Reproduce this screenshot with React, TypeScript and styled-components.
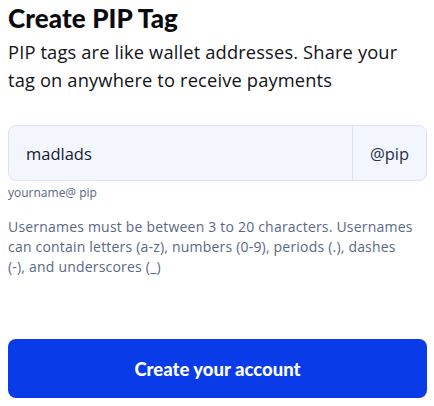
import React from "react";
import styled, { createGlobalStyle } from "styled-components";

const Global = createGlobalStyle`
  html, body { margin: 0; padding: 0; background: #ffffff; }
  body { font-family: "Open Sans", "Lato", sans-serif; }
`;

const Page = styled.div`
  padding: 0 7px 0 8px;
  display: flex;
  flex-direction: column;
`;

const Title = styled.h1`
  margin: 2px 0 0 0;
  font-family: "Lato", sans-serif;
  font-weight: 900;
  font-size: 26px;
  line-height: 32px;
  color: #0b0b0f;
  letter-spacing: 0.1px;
`;

const Subtitle = styled.p`
  margin: 4px 0 0 0;
  font-size: 18.3px;
  letter-spacing: 0.15px;
  line-height: 28px;
  color: #121217;
  font-weight: 400;
`;

const Field = styled.div`
  margin-top: 31px;
  display: flex;
  height: 56px;
  border: 1px solid #dbe2f5;
  border-radius: 8px;
  background: #f3f6fe;
  box-sizing: border-box;
  overflow: hidden;
`;

const Input = styled.div`
  flex: 1;
  display: flex;
  align-items: center;
  padding-left: 17px;
  font-size: 16.5px;
  color: #161a2e;
`;

const Suffix = styled.div`
  width: 73px;
  border-left: 1px solid #dbe2f5;
  display: flex;
  align-items: center;
  justify-content: center;
  font-size: 16.5px;
  color: #2a2f45;
`;

const Hint = styled.div`
  margin-top: 4px;
  font-size: 12px;
  line-height: 15px;
  color: #5b6785;
`;

const Rules = styled.p`
  margin: 17px 0 0 0;
  font-size: 14px;
  letter-spacing: 0.2px;
  line-height: 20px;
  color: #5b6785;
`;

const Button = styled.button`
  margin-top: 62px;
  height: 59px;
  border: none;
  border-radius: 8px;
  background: #0a3be8;
  color: #ffffff;
  font-family: "Lato", sans-serif;
  font-weight: 900;
  font-size: 18.5px;
  cursor: pointer;
`;

export default function App() {
  return (
    <>
      <Global />
      <Page>
        <Title>Create PIP Tag</Title>
        <Subtitle>
          PIP tags are like wallet addresses. Share your tag on anywhere to receive payments
        </Subtitle>
        <Field>
          <Input>madlads</Input>
          <Suffix>@pip</Suffix>
        </Field>
        <Hint>yourname@ pip</Hint>
        <Rules>
          Usernames must be between 3 to 20 characters. Usernames can contain letters (a-z),
          numbers (0-9), periods (.), dashes
          <br />
          (-), and underscores (_)
        </Rules>
        <Button>Create your account</Button>
      </Page>
    </>
  );
}
